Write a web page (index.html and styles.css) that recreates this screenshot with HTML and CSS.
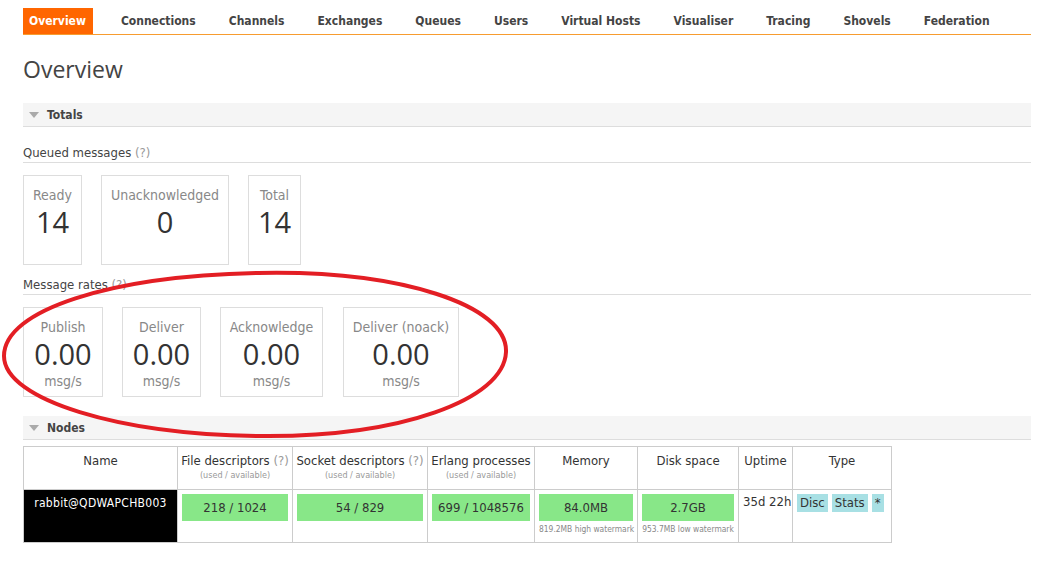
FILE: index.html
```html
<!DOCTYPE html>
<html>
<head>
<meta charset="utf-8">
<link rel="stylesheet" href="styles.css">
</head>
<body>
<div class="page">
  <nav class="menu">
    <a class="tab active">Overview</a>
    <a class="tab">Connections</a>
    <a class="tab">Channels</a>
    <a class="tab">Exchanges</a>
    <a class="tab">Queues</a>
    <a class="tab">Users</a>
    <a class="tab">Virtual Hosts</a>
    <a class="tab">Visualiser</a>
    <a class="tab">Tracing</a>
    <a class="tab">Shovels</a>
    <a class="tab">Federation</a>
  </nav>

  <h1 class="title">Overview</h1>

  <div class="section-head"><span class="tri"></span>Totals</div>

  <div class="sub-head">Queued messages <span class="help">(?)</span></div>
  <div class="boxes">
    <div class="box w-ready"><div class="lbl">Ready</div><div class="num">14</div></div>
    <div class="box w-unack"><div class="lbl">Unacknowledged</div><div class="num">0</div></div>
    <div class="box w-total"><div class="lbl">Total</div><div class="num">14</div></div>
  </div>

  <div class="sub-head rates-head">Message rates <span class="help">(?)</span></div>
  <div class="boxes">
    <div class="box w-pub"><div class="lbl">Publish</div><div class="num">0.00</div><div class="unit">msg/s</div></div>
    <div class="box w-del"><div class="lbl">Deliver</div><div class="num">0.00</div><div class="unit">msg/s</div></div>
    <div class="box w-ack"><div class="lbl">Acknowledge</div><div class="num">0.00</div><div class="unit">msg/s</div></div>
    <div class="box w-noack"><div class="lbl">Deliver (noack)</div><div class="num">0.00</div><div class="unit">msg/s</div></div>
  </div>

  <div class="section-head nodes-head"><span class="tri"></span>Nodes</div>

  <table class="nodes">
    <colgroup>
      <col class="c-name"><col class="c-fd"><col class="c-sd"><col class="c-ep"><col class="c-mem"><col class="c-disk"><col class="c-up"><col class="c-type">
    </colgroup>
    <thead>
      <tr>
        <th>Name</th>
        <th>File descriptors <span class="help">(?)</span><div class="small">(used / available)</div></th>
        <th>Socket descriptors <span class="help">(?)</span><div class="small">(used / available)</div></th>
        <th>Erlang processes<div class="small">(used / available)</div></th>
        <th>Memory</th>
        <th>Disk space</th>
        <th>Uptime</th>
        <th>Type</th>
      </tr>
    </thead>
    <tbody>
      <tr>
        <td class="name-cell"><span class="redacted">rabbit@QDWAPCHB003</span></td>
        <td><div class="bar">218 / 1024</div></td>
        <td><div class="bar">54 / 829</div></td>
        <td><div class="bar">699 / 1048576</div></td>
        <td><div class="bar">84.0MB</div><div class="tiny">819.2MB high watermark</div></td>
        <td><div class="bar">2.7GB</div><div class="tiny">953.7MB low watermark</div></td>
        <td class="uptime">35d 22h</td>
        <td class="types"><span class="badge">Disc</span><span class="badge">Stats</span><span class="badge">*</span></td>
      </tr>
    </tbody>
  </table>
</div>

<svg class="annotation" width="1037" height="571" viewBox="0 0 1037 571">
  <path d="M 258 273 C 400 270, 508 305, 506 352 C 504 400, 400 437, 262 436 C 120 435, 4 400, 4 356 C 4 310, 110 276, 258 273 Z" fill="none" stroke="#e31e24" stroke-width="4"/>
</svg>
</body>
</html>
```

FILE: styles.css
```css
html, body {
  margin: 0;
  padding: 0;
  background: #fff;
}
body {
  font-family: "DejaVu Sans Condensed", "DejaVu Sans", Verdana, sans-serif;
  font-size: 13px;
  color: #444;
  position: relative;
  width: 1037px;
  height: 571px;
  overflow: hidden;
}
.page {
  padding: 8px 6px 0 23px;
}
.menu {
  display: flex;
  align-items: stretch;
  height: 26px;
  border-bottom: 1px solid #f79c2f;
  width: 1008px;
}
.tab {
  display: flex;
  align-items: center;
  font-weight: bold;
  font-size: 12px;
  color: #444;
  padding: 0 6px;
  margin-right: 21px;
}
.tab.active {
  background: #f60;
  color: #fff;
  padding: 0 7px 0 6px;
  margin-right: 22px;
}
.title {
  font-family: "Open Sans", "DejaVu Sans", sans-serif;
  font-weight: 400;
  font-size: 23px;
  color: #444;
  margin: 19px 0 19px 0;
  line-height: 30px;
}
.section-head {
  display: flex;
  align-items: center;
  height: 23px;
  background: #f5f5f5;
  border-bottom: 1px solid #ddd;
  font-weight: bold;
  font-size: 12px;
  color: #444;
  width: 1008px;
}
.tri {
  width: 0;
  height: 0;
  border-left: 5px solid transparent;
  border-right: 5px solid transparent;
  border-top: 6px solid #aaa;
  margin: 0 8px 0 6px;
}
.sub-head {
  width: 1008px;
  border-bottom: 1px solid #ddd;
  padding-bottom: 1px;
  margin-top: 18px;
  font-size: 13px;
  line-height: 16px;
  color: #444;
}
.rates-head {
  margin-top: 12px;
}
.help {
  color: #999;
}
.boxes {
  display: flex;
  gap: 19px;
  margin-top: 12px;
}
.box {
  border: 1px solid #ddd;
  box-sizing: border-box;
  height: 90px;
  text-align: center;
  padding-top: 11px;
}
.lbl {
  font-size: 14px;
  color: #888;
  line-height: 16px;
}
.num {
  font-family: "Open Sans", "DejaVu Sans", sans-serif;
  font-size: 29px;
  line-height: 38px;
  color: #333;
}
.unit {
  font-size: 14px;
  color: #888;
  line-height: 16px;
}
.w-ready { width: 59px; }
.w-unack { width: 128px; }
.w-total { width: 53px; }
.w-pub { width: 80px; }
.w-del { width: 79px; }
.w-ack { width: 103px; }
.w-noack { width: 116px; margin-left: 1px; }

.nodes-head {
  margin-top: 19px;
}
.nodes {
  margin-top: 6px;
  border-collapse: collapse;
  table-layout: fixed;
  width: 868px;
  font-size: 13px;
}
.nodes th, .nodes td {
  border: 1px solid #ccc;
  vertical-align: top;
  text-align: center;
  overflow: hidden;
}
.nodes th {
  font-weight: normal;
  color: #333;
  height: 43px;
  padding: 6px 0 0;
  box-sizing: border-box;
  white-space: nowrap;
}
.small {
  font-size: 9px;
  color: #999;
  margin-top: 2px;
}
.c-name { width: 154px; }
.c-fd { width: 115px; }
.c-sd { width: 135px; }
.c-ep { width: 107px; }
.c-mem { width: 103px; }
.c-disk { width: 101px; }
.c-up { width: 54px; }
.c-type { width: 99px; }
.nodes td {
  height: 53px;
  padding: 4px 4px 0;
  box-sizing: border-box;
}
.nodes td.name-cell {
  background: #000;
  color: #fff;
  padding: 6px 2px 0;
  font-size: 12px;
  letter-spacing: 0.3px;
  white-space: nowrap;
  text-align: center;
}
.bar {
  background: #88e788;
  height: 27px;
  line-height: 27px;
  font-size: 13px;
  color: #333;
}
.tiny {
  font-size: 8.4px;
  color: #888;
  margin-top: 3px;
  white-space: nowrap;
}
.uptime {
  font-size: 13px;
  color: #333;
  white-space: nowrap;
}
.nodes td.types {
  text-align: left;
  padding-left: 4px;
  white-space: nowrap;
}
.badge {
  display: inline-block;
  background: #a8e0e4;
  color: #333;
  font-size: 13px;
  line-height: 18px;
  padding: 0 3px;
  margin-right: 4px;
}
.annotation {
  position: absolute;
  left: 0;
  top: 0;
  pointer-events: none;
}
```
